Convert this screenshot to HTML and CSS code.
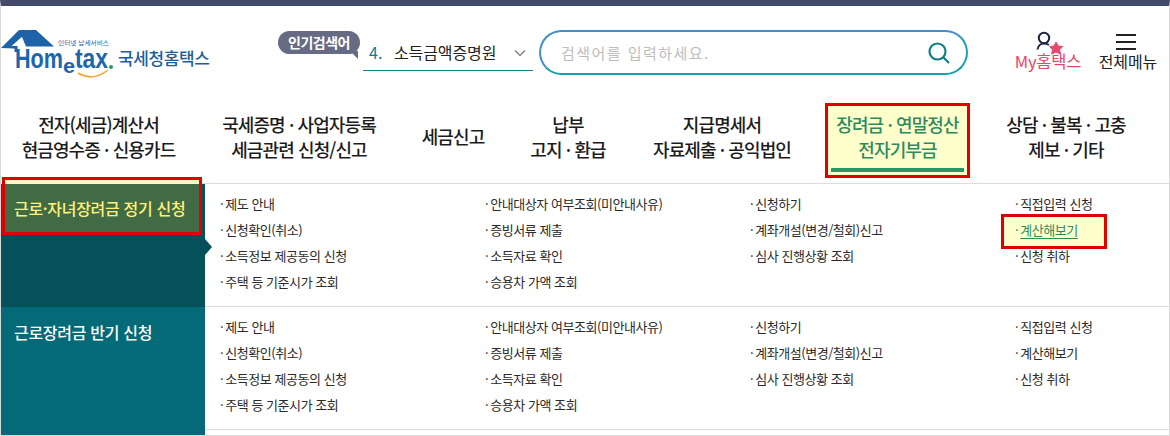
FILE: index.html
```html
<!DOCTYPE html>
<html lang="ko">
<head>
<meta charset="utf-8">
<title>Hometax</title>
<link rel="stylesheet" href="styles.css">
</head>
<body>
<div class="page">
  <header class="top">
    <a class="logo">
      <svg class="logo-art" width="113" height="50" viewBox="0 0 113 50">
        <path class="roof-fill" d="M18 0 L35 0 L53 16.5 L25 16.5 Z"/>
        <path class="roof-fill" d="M0 18 L18 0 L23 5 L10.5 16 L16.5 16 L16.5 22 L13.5 22 L13.5 18.5 Z"/>
        <text class="logo-small" x="57" y="15" textLength="51" lengthAdjust="spacingAndGlyphs">인터넷 납세서비스</text>
        <text class="logo-word" x="14" y="38" textLength="48" lengthAdjust="spacingAndGlyphs">Hom</text>
        <text class="logo-e" x="62" y="43" textLength="12" lengthAdjust="spacingAndGlyphs">e</text>
        <text class="logo-tax" x="74" y="38" textLength="33" lengthAdjust="spacingAndGlyphs">tax</text>
        <circle class="logo-dot" cx="110" cy="37" r="2"/>
        <path class="logo-smile" d="M77 43 Q92 52 107 40"/>
      </svg>
      <span class="logo-name">국세청홈택스</span>
    </a>
    <div class="popular">
      <span class="bubble">인기검색어</span>
      <div class="rank"><b>4.</b><span>소득금액증명원</span>
        <svg class="chev" width="16" height="10" viewBox="0 0 16 10"><path d="M3 2.5 L8 7.5 L13 2.5"/></svg>
      </div>
    </div>
    <div class="search">
      <span>검색어를 입력하세요.</span>
      <svg width="24" height="24" viewBox="0 0 24 24"><circle cx="10.5" cy="10.5" r="8"/><path d="M16.5 16.5 L22 22"/></svg>
    </div>
    <div class="my">
      <svg width="28" height="28" viewBox="0 0 28 28">
        <circle class="ic-line" cx="8" cy="8" r="5.2"/>
        <path class="ic-line" d="M1.5 19.5 C2 15.5 5 13.5 8 13.5 C10 13.5 11.5 14 13 15"/>
        <path class="ic-star" d="M20 12 L22.2 16 L26.5 16.6 L23.6 19.8 L24.6 24 L20 22 L15.6 24 L16.5 19.8 L13.6 16.6 L18 16 Z"/>
      </svg>
      <span>My홈택스</span>
    </div>
    <div class="all">
      <span class="burger"><i></i><i></i><i></i></span>
      <span class="all-label">전체메뉴</span>
    </div>
  </header>

  <nav class="gnb">
    <a>전자(세금)계산서<br>현금영수증 · 신용카드</a>
    <a>국세증명 · 사업자등록<br>세금관련 신청/신고</a>
    <a>세금신고</a>
    <a>납부<br>고지 · 환급</a>
    <a>지급명세서<br>자료제출 · 공익법인</a>
    <a class="on">장려금 · 연말정산<br>전자기부금</a>
    <a>상담 · 불복 · 고충<br>제보 · 기타</a>
  </nav>

  <section class="row active">
    <h3 class="side"><span class="side-head">근로·자녀장려금 정기 신청</span></h3>
    <ul class="links">
      <li>제도 안내</li><li>안내대상자 여부조회(미안내사유)</li><li>신청하기</li><li>직접입력 신청</li>
      <li>신청확인(취소)</li><li>증빙서류 제출</li><li>계좌개설(변경/철회)신고</li><li class="cur"><span>계산해보기</span></li>
      <li>소득정보 제공동의 신청</li><li>소득자료 확인</li><li>심사 진행상황 조회</li><li>신청 취하</li>
      <li>주택 등 기준시가 조회</li><li>승용차 가액 조회</li>
    </ul>
  </section>
  <section class="row second">
    <h3 class="side"><span class="side-head">근로장려금 반기 신청</span></h3>
    <ul class="links">
      <li>제도 안내</li><li>안내대상자 여부조회(미안내사유)</li><li>신청하기</li><li>직접입력 신청</li>
      <li>신청확인(취소)</li><li>증빙서류 제출</li><li>계좌개설(변경/철회)신고</li><li>계산해보기</li>
      <li>소득정보 제공동의 신청</li><li>소득자료 확인</li><li>심사 진행상황 조회</li><li>신청 취하</li>
      <li>주택 등 기준시가 조회</li><li>승용차 가액 조회</li>
    </ul>
  </section>
</div>
</body>
</html>
```
FILE: styles.css
```css
*, *::before, *::after { box-sizing: border-box; }
html, body { margin: 0; padding: 0; background: #fff; }
body {
  width: 1170px; height: 436px; overflow: hidden;
  font-family: "Noto Sans CJK KR", "Noto Sans", sans-serif;
  color: #222;
}
.page {
  height: 436px;
  border-top: 6px solid #444a6b;
  border-left: 1px solid #d9d9d9;
  border-right: 1px solid #d9d9d9;
  border-bottom: 1px solid #d9d9d9;
  overflow: hidden;
}

/* header */
.top { display: flex; height: 94px; align-items: flex-start; }
.logo { display: flex; align-items: flex-start; width: 276px; padding-top: 24px; flex: none; }
.logo-art { flex: none; }
.roof-fill { fill: #1e63a8; }
.logo-small { font-size: 6px; fill: #1e63a8; }
.logo-word { font-family: "Liberation Sans", sans-serif; font-weight: 700; font-size: 28px; fill: #1b66ae; }
.logo-tax { font-family: "Liberation Sans", sans-serif; font-weight: 700; font-size: 27px; fill: #1b66ae; }
.logo-e { font-family: "Liberation Sans", sans-serif; font-weight: 700; font-size: 20px; fill: #1b66ae; }
.logo-dot { fill: #2f9a58; }
.logo-smile { fill: none; stroke: #eea93a; stroke-width: 1.6; }
.logo-name { margin: 18px 0 0 4px; font-size: 17px; font-weight: 500; color: #1d5f9e; line-height: 20px; white-space: nowrap; letter-spacing: -.4px; }

.popular { position: relative; width: 263px; height: 60px; padding-top: 31px; flex: none; }
.bubble {
  position: absolute; left: 1px; top: 25px;
  width: 82px; height: 23px; border-radius: 12px;
  background: #666a83; color: #fff;
  font-size: 14px; font-weight: 700; line-height: 22px; text-align: center; letter-spacing: -.5px;
}
.bubble::after {
  content: ""; position: absolute; right: 2px; bottom: -5px;
  border-style: solid; border-width: 8px 0 0 8px; border-color: #666a83 transparent transparent transparent;
}
.rank {
  display: flex; align-items: center;
  margin-left: 86px; width: 170px; height: 34px;
  border-bottom: 1px solid #11808e;
  padding: 0 0 4px 6px;
  font-size: 16px;
}
.rank b { font-weight: 400; color: #0f7c8a; width: 25px; }
.rank span { letter-spacing: -.1px; width: 118px; white-space: nowrap; }
.chev { flex: none; margin-top: 3px; fill: none; stroke: #777; stroke-width: 1.2; }

.search {
  display: flex; align-items: center; justify-content: space-between;
  width: 429px; height: 45px; margin: 24px 0 0 -1px; flex: none;
  border-radius: 23px;
  border: 2px solid;
  border-color: #3f8fd0 #1aa2ab #1aa2ab #3f8fd0;
  padding: 0 15px 0 20px;
  font-size: 15px; color: #bdbdbd; letter-spacing: 1.45px;
}
.search svg { fill: none; stroke: #127f88; stroke-width: 2.2; }

.my {
  display: flex; flex-direction: column; align-items: center; flex: none;
  width: 84px; margin: 24px 0 0 38px; color: #e8446a;
  font-size: 16.5px; line-height: 18px; letter-spacing: -.2px; white-space: nowrap;
}
.my svg { height: 28px; margin-left: 4px; margin-bottom: -6px; }
.ic-line { fill: none; stroke: #1d2440; stroke-width: 2; }
.ic-star { fill: #e8476f; stroke: #e8476f; stroke-width: 1; stroke-linejoin: round; }
.all {
  display: flex; flex-direction: column; align-items: center; flex: none;
  width: 72px; margin-top: 28px;
  font-size: 16px; line-height: 18px; letter-spacing: -.1px;
}
.burger { display: flex; flex-direction: column; gap: 5px; margin-bottom: 2px; }
.burger i { display: block; width: 20px; height: 2px; background: #222; }
.all-label { margin-left: 4px; white-space: nowrap; }

/* main nav */
.gnb {
  display: grid;
  grid-template-columns: 195px 206px 102px 128px 180px 168px 172px;
  height: 84px;
  border-bottom: 1px solid #dcdcdc;
  font-size: 18px; line-height: 25px; letter-spacing: -.9px; font-weight: 500;
  text-align: center;
}
.gnb a { display: flex; align-items: center; justify-content: center; padding-bottom: 10px; color: #1c1c1c; }
.gnb .on {
  position: relative; color: #2e8a5f; background: #ffffcc;
  margin: 6px 13px 8px 16px; padding-bottom: 8px;
  box-shadow: 0 0 0 3px #e00000;
}
.gnb .on::after {
  content: ""; position: absolute; left: 3px; right: 3px; bottom: 3px; height: 4px;
  background: #2d9466;
}

/* rows */
.row { display: flex; height: 123px; align-items: stretch; }
.row.second { height: 129px; }
.side { margin: 0; width: 204px; flex: none; background: #056a78; color: #fff; font-size: 16px; font-weight: 500; letter-spacing: -.3px; }
.side-head { display: block; height: 50px; line-height: 50px; padding-left: 13px; white-space: nowrap; }
.active .side { position: relative; background: #06505a; }
.active .side-head {
  position: relative;
  background: #416b45; color: #fff27c;
  height: 48px; line-height: 48px;
  width: 194px; margin-left: 4px; padding-left: 9px;
  box-shadow: 0 -4px 0 #fff8c6;
}
.active .side-head::before {
  content: ""; position: absolute; left: -3px; right: -3px; top: -7px; bottom: -3px;
  border: 3px solid #e00000;
}
.active .side::after {
  content: ""; position: absolute; right: -7px; top: 55px;
  border-style: solid; border-width: 8px 0 8px 7px;
  border-color: transparent transparent transparent #06505a;
}
.links {
  list-style: none; margin: 0; padding: 7px 0 0 15px;
  display: grid; grid-template-columns: repeat(4, 265px); grid-auto-rows: 26px;
  font-size: 13px; line-height: 26px; letter-spacing: -.45px;
  color: #2a2a2a; flex: 1; height: 123px;
  border-bottom: 1px solid #dcdcdc;
}
.links li::before { content: "·"; margin-right: 2px; }
.cur { position: relative; color: #2e8a5f; z-index: 1; }
.cur::after {
  content: ""; position: absolute; left: -14px; top: -3px; width: 106px; height: 35px;
  background: #ffffcc; border: 3px solid #e00000; z-index: -1;
}
.cur span { text-decoration: underline; text-underline-offset: 3px; }
```
